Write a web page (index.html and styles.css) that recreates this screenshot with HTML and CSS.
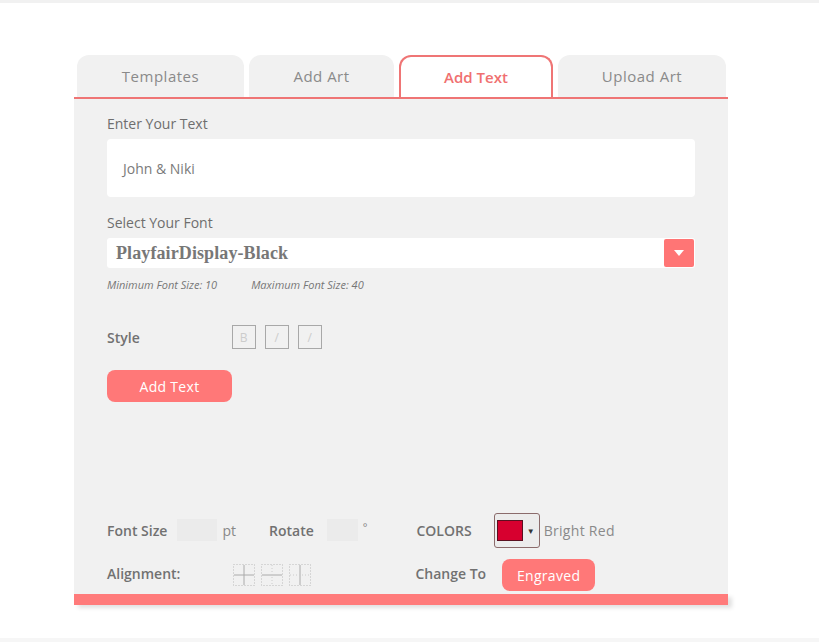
FILE: index.html
```html
<!DOCTYPE html>
<html>
<head>
<meta charset="utf-8">
<link rel="stylesheet" href="styles.css">
</head>
<body>
<div class="topstrip"></div>
<div class="wrap">
  <div class="tabs">
    <div class="tab t1">Templates</div>
    <div class="tab t2">Add Art</div>
    <div class="tab t3 active">Add Text</div>
    <div class="tab t4">Upload Art</div>
  </div>
  <div class="panel">
    <div class="label">Enter Your Text</div>
    <div class="textinput">John &amp; Niki</div>
    <div class="label l2">Select Your Font</div>
    <div class="select">
      <span class="fontname">PlayfairDisplay-Black</span>
      <span class="ddbtn"><svg width="10" height="6" viewBox="0 0 10 6"><path d="M0 0H10L5 6Z" fill="#fff"/></svg></span>
    </div>
    <div class="limits"><span>Minimum Font Size: 10</span><span class="max">Maximum Font Size: 40</span></div>
    <div class="stylerow">
      <span class="strong-label">Style</span>
      <div class="sbtns">
        <span class="sbox">B</span><span class="sbox">/</span><span class="sbox">/</span>
      </div>
    </div>
    <div class="btn addbtn">Add Text</div>
    <div class="bottom">
      <div class="brow r1">
        <span class="strong-label">Font Size</span>
        <span class="num fs"></span>
        <span class="unit">pt</span>
        <span class="strong-label rot">Rotate</span>
        <span class="num rt"></span>
        <span class="unit deg">°</span>
        <span class="strong-label colors">COLORS</span>
        <span class="colorpick"><span class="swatch"></span><span class="caret">▼</span></span>
        <span class="cname">Bright Red</span>
      </div>
      <div class="brow r2">
        <span class="strong-label lift">Alignment:</span>
        <div class="aligns">
          <svg width="22" height="22" viewBox="0 0 22 22"><rect x="0.5" y="0.5" width="21" height="21" fill="none" stroke="#bbb" stroke-dasharray="1 2"/><path d="M11 1V21M1 11H21" stroke="#aaa"/></svg>
          <svg width="22" height="22" viewBox="0 0 22 22"><rect x="0.5" y="0.5" width="21" height="21" fill="none" stroke="#bbb" stroke-dasharray="1 2"/><path d="M1 11H21" stroke="#aaa"/><path d="M11 1V21" stroke="#ccc" stroke-dasharray="1 2"/></svg>
          <svg width="22" height="22" viewBox="0 0 22 22"><rect x="0.5" y="0.5" width="21" height="21" fill="none" stroke="#bbb" stroke-dasharray="1 2"/><path d="M11 1V21" stroke="#aaa"/><path d="M1 11H21" stroke="#ccc" stroke-dasharray="1 2"/></svg>
        </div>
        <span class="strong-label change lift">Change To</span>
        <span class="btn engr">Engraved</span>
      </div>
    </div>
  </div>
  <div class="bar"></div>
</div>
<div class="bottomstrip"></div>
</body>
</html>
```
FILE: styles.css
```css
html, body { margin: 0; padding: 0; }
body {
  width: 819px; height: 642px; background: #fff; position: relative; overflow: hidden;
  font-family: "Open Sans", "Noto Sans", sans-serif; color: #777;
}
.topstrip { height: 3px; background: #f1f1f1; }
.bottomstrip { position: absolute; left: 0; right: 0; bottom: 0; height: 4px; background: #f6f6f6; }
.wrap { margin: 52px 0 0 74px; width: 654px; }
.tabs { display: flex; padding-left: 3px; gap: 5px; height: 42px; border-bottom: 2px solid #ef7575; }
.tab {
  box-sizing: border-box; height: 42px; background: #f1f1f1; border-radius: 12px 12px 0 0;
  display: flex; align-items: center; justify-content: center; font-size: 15px; color: #8a8a8a;
  letter-spacing: 0.5px;
}
.t1 { width: 167px; }
.t2 { width: 145px; }
.t3 { width: 154px; }
.t4 { width: 168px; }
.tab.active { background: #fff; border: 2px solid #ef7575; border-bottom: none; color: #f07070; font-weight: 600; letter-spacing: 0; }
.panel { background: #f1f1f1; padding: 16px 33px 0 33px; height: 495px; box-sizing: border-box; position: relative; }
.label { font-size: 14px; color: #6e6e6e; font-weight: 500; line-height: 18px; }
.l2 { margin-top: 17px; }
.textinput {
  margin-top: 6px; height: 58px; background: #fff; border-radius: 4px; box-sizing: border-box;
  padding-left: 16px; display: flex; align-items: center; font-size: 14px; color: #7a7a7a;
}
.select {
  margin-top: 6px; height: 30px; background: #fff; border-radius: 3px; display: flex; align-items: center;
  justify-content: space-between; padding-left: 9px;
}
.fontname { font-family: "Liberation Serif", "DejaVu Serif", serif; font-weight: 700; font-size: 18px; color: #777; letter-spacing: 0.1px; }
.ddbtn { width: 30px; height: 28px; background: #ff7575; border-radius: 2px; display: flex; align-items: center; justify-content: center; margin-right: 1px; }
.limits { margin-top: 10px; font-size: 11px; font-style: italic; color: #777; line-height: 14px; }
.limits .max { margin-left: 34px; }
.stylerow { margin-top: 33px; display: flex; align-items: center; height: 24px; }
.strong-label { font-size: 14px; color: #717171; font-weight: 600; }
.lift { margin-top: -4px; }
.sbtns { display: flex; gap: 9px; margin-left: 92px; }
.sbox { width: 24px; height: 24px; box-sizing: border-box; border: 1px solid #a8a8a8; display: flex; align-items: center; justify-content: center; font-size: 12px; color: #ccc; }
.btn { background: #ff7878; color: #fff; border-radius: 8px; display: flex; align-items: center; justify-content: center; font-size: 14px; letter-spacing: 0.3px; }
.addbtn { margin-top: 21px; width: 125px; height: 32px; }
.bottom { position: absolute; left: 33px; top: 413px; right: 33px; }
.brow { display: flex; align-items: center; }
.r1 { height: 36px; }
.r2 { margin-top: 11px; height: 32px; }
.num { width: 40px; height: 22px; background: #ebebeb; margin-left: 10px; }
.rt { width: 31px; margin-left: 13px; }
.unit { font-size: 14px; color: #888; margin-left: 5px; }
.deg { font-size: 11px; margin-top: -8px; }
.rot { margin-left: 33px; }
.colors { margin-left: 49px; }
.colorpick {
  margin-left: 22px; width: 46px; height: 35px; box-sizing: border-box; border: 1px solid #8b6b6b; border-radius: 3px;
  display: flex; align-items: center; padding-left: 2px; background: #ececec;
}
.swatch { width: 24px; height: 19px; background: #d7002f; border: 1px solid #5a1020; }
.caret { font-size: 8px; color: #333; margin-left: 4px; }
.cname { font-size: 14px; color: #8a8a8a; margin-left: 4px; letter-spacing: 0.3px; }
.aligns { display: flex; gap: 6px; margin-left: 53px; }
.change { margin-left: 104px; }
.engr { margin-left: 16px; width: 93px; height: 32px; font-size: 14px; }
.bar { height: 11px; background: #ff7b7b; box-shadow: 4px 3px 4px rgba(0,0,0,0.12); }
```
